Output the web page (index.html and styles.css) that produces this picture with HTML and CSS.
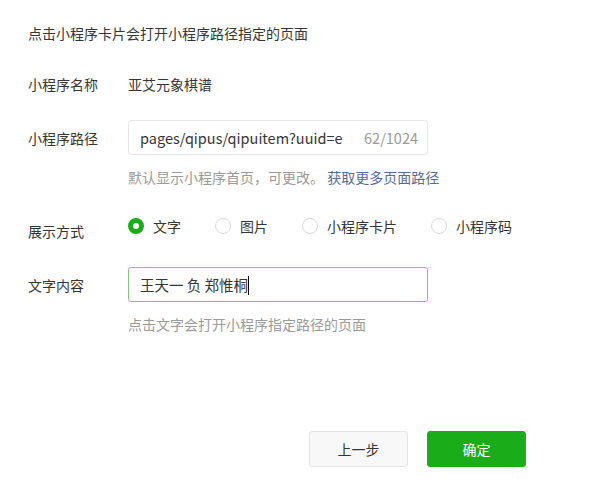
FILE: index.html
```html
<!DOCTYPE html>
<html lang="zh-CN">
<head>
  <meta charset="UTF-8">
  <title>小程序卡片</title>
  <link rel="stylesheet" href="styles.css">
</head>
<body>

<div class="dialog">
  <p class="tip">点击小程序卡片会打开小程序路径指定的页面</p>

  <div class="form">
    <div class="row row-name">
      <label class="label">小程序名称</label>
      <div class="value">亚艾元象棋谱</div>
    </div>

    <div class="row">
      <label class="label">小程序路径</label>
      <div class="field">
        <div class="input">
          <span class="input-text">pages/qipus/qipuitem?uuid=e</span>
          <span class="counter">62/1024</span>
        </div>
        <p class="desc">默认显示小程序首页，可更改。 <a href="#" class="link">获取更多页面路径</a></p>
      </div>
    </div>

    <div class="row row-radio">
      <label class="label">展示方式</label>
      <div class="radios">
        <span class="radio checked"><i class="dot"></i>文字</span>
        <span class="radio"><i class="dot"></i>图片</span>
        <span class="radio"><i class="dot"></i>小程序卡片</span>
        <span class="radio"><i class="dot"></i>小程序码</span>
      </div>
    </div>

    <div class="row">
      <label class="label">文字内容</label>
      <div class="field">
        <div class="input focus">
          <span class="input-text">王天一 负 郑惟桐<i class="caret"></i></span>
        </div>
        <p class="desc">点击文字会打开小程序指定路径的页面</p>
      </div>
    </div>
  </div>

  <div class="actions">
    <button class="btn">上一步</button>
    <button class="btn btn-primary">确定</button>
  </div>
</div>

</body>
</html>
```

FILE: styles.css
```css
body {
  margin: 0;
  font-family: "Noto Sans CJK SC", "Noto Sans", sans-serif;
  font-size: 14px;
  color: #353535;
  background: #fff;
}
.dialog {
  padding: 23px 28px 0;
}
.tip {
  margin: 0;
  line-height: 20px;
}
.form {
  margin-top: 31px;
}
.row {
  display: flex;
  align-items: flex-start;
  margin-bottom: 29px;
}
.row-name {
  margin-bottom: 26px;
}
.row-radio {
  margin-bottom: 26px;
}
.label {
  width: 100px;
  flex-shrink: 0;
  line-height: 20px;
}
.row .field .input + .desc {
  margin-top: 12px;
}
.row:not(.row-name):not(.row-radio) > .label {
  margin-top: 8px;
}
.value {
  line-height: 20px;
}
.field {
  width: 300px;
}
.input {
  display: flex;
  align-items: center;
  justify-content: space-between;
  height: 35px;
  box-sizing: border-box;
  border: 1px solid #e7e7eb;
  border-radius: 3px;
  padding: 0 9px 0 11px;
  font-size: 14.5px;
  line-height: 20px;
}
.input.focus {
  border-color: #80c77c;
}
.input-text {
  white-space: nowrap;
  overflow: hidden;
  color: #353535;
}
.caret {
  display: inline-block;
  width: 1px;
  height: 19px;
  background: #000;
  vertical-align: -4px;
}
.counter {
  color: #9a9a9a;
}
.desc {
  margin: 0;
  line-height: 20px;
  color: #9a9a9a;
  white-space: nowrap;
}
.link {
  color: #576b95;
  text-decoration: none;
}
.row-radio .label {
  margin-top: 5px;
}
.radios {
  display: flex;
  line-height: 20px;
}
.radio {
  display: flex;
  align-items: center;
  margin-right: 34px;
}
.dot {
  width: 16px;
  height: 16px;
  box-sizing: border-box;
  border: 1px solid #d9d9d9;
  border-radius: 50%;
  margin-right: 9px;
}
.radio.checked .dot {
  border: 5px solid #1aad19;
}
.actions {
  display: flex;
  justify-content: flex-end;
  gap: 19px;
  margin-top: 97px;
  padding-right: 57px;
}
.btn {
  width: 99px;
  height: 36px;
  border: 1px solid #e5e5e5;
  border-radius: 3px;
  background: #f8f8f8;
  color: #353535;
  font-family: inherit;
  font-size: 14px;
}
.btn-primary {
  background: #1aad19;
  border-color: #1aad19;
  color: #fff;
}
```
